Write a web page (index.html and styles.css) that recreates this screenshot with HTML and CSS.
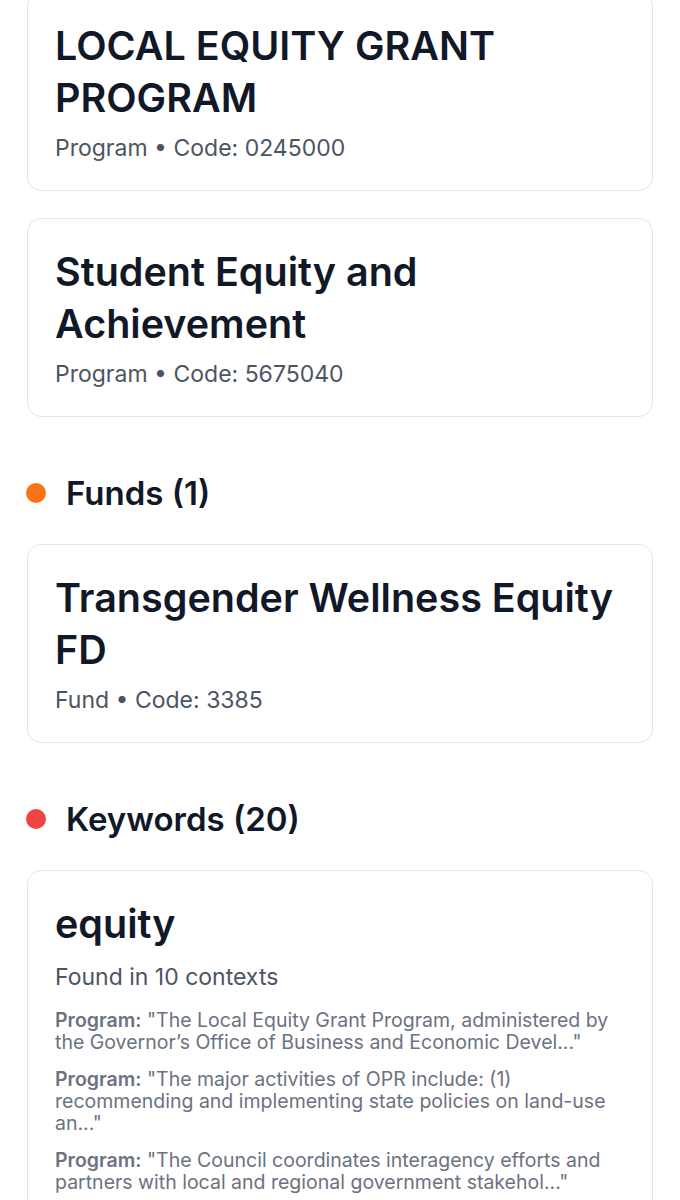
FILE: index.html
```html
<!DOCTYPE html>
<html lang="en">
<head>
<meta charset="utf-8">
<title>Search results</title>
<link rel="stylesheet" href="styles.css">
</head>
<body>
<div class="results">
  <div class="card">
    <h3 class="card-title">LOCAL EQUITY GRANT PROGRAM</h3>
    <p class="card-meta">Program • Code: 0245000</p>
  </div>
  <div class="card">
    <h3 class="card-title">Student Equity and Achievement</h3>
    <p class="card-meta">Program • Code: 5675040</p>
  </div>

  <h2 class="section-head"><span class="dot dot-orange"></span>Funds (1)</h2>
  <div class="card">
    <h3 class="card-title">Transgender Wellness Equity FD</h3>
    <p class="card-meta">Fund • Code: 3385</p>
  </div>

  <h2 class="section-head"><span class="dot dot-red"></span>Keywords (20)</h2>
  <div class="card">
    <h3 class="card-title">equity</h3>
    <p class="card-meta card-meta-kw">Found in 10 contexts</p>
    <ul class="contexts">
      <li><strong>Program:</strong> "The Local Equity Grant Program, administered by the Governor’s Office of Business and Economic Devel..."</li>
      <li><strong>Program:</strong> "The major activities of OPR include: (1) recommending and implementing state policies on land-use an..."</li>
      <li><strong>Program:</strong> "The Council coordinates interagency efforts and partners with local and regional government stakehol..."</li>
      <li><strong>Program:</strong> "The Department works to advance equity across programs and services..."</li>
    </ul>
  </div>
</div>
</body>
</html>
```

FILE: styles.css
```css
html, body {
  margin: 0;
  padding: 0;
  background: #ffffff;
}
body {
  font-family: Inter, "Noto Sans", "Liberation Sans", sans-serif;
  color: #111827;
}
.results {
  margin-top: -8px;
  padding: 0 27px;
  display: flex;
  flex-direction: column;
}
.card {
  background: #ffffff;
  border: 1.5px solid #e5e7eb;
  border-radius: 14px;
  padding: 27px;
  margin-bottom: 27px;
}
.card-title {
  margin: 0;
  font-size: 39.5px;
  line-height: 52px;
  font-weight: 600;
  color: #111827;
}
.card-meta {
  margin: 9px 0 0 0;
  font-size: 23px;
  line-height: 30px;
  color: #4b5563;
}
.card-meta-kw {
  margin-top: 12px;
}
.section-head {
  display: flex;
  align-items: center;
  gap: 20px;
  margin: 29px 0 31px -1px;
  font-size: 33px;
  line-height: 40px;
  font-weight: 600;
  color: #111827;
}
.dot {
  width: 20px;
  height: 20px;
  border-radius: 50%;
  flex: none;
}
.dot-orange { background: #f97316; }
.dot-red { background: #ef4444; }
.contexts {
  list-style: none;
  margin: 17px 0 0 0;
  padding: 0;
  display: flex;
  flex-direction: column;
  gap: 15px;
}
.contexts li {
  font-size: 19.5px;
  line-height: 22px;
  color: #6b7280;
}
.contexts strong {
  font-weight: 600;
}
```
